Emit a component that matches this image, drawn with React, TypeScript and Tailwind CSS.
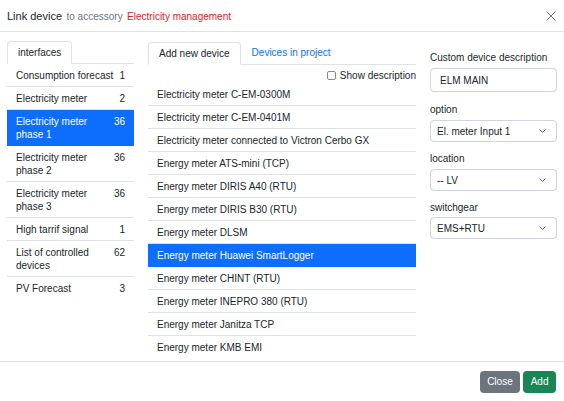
import React from "react";

const interfaces: { name: string; count: number; active?: boolean }[] = [
  { name: "Consumption forecast", count: 1 },
  { name: "Electricity meter", count: 2 },
  { name: "Electricity meter phase 1", count: 36, active: true },
  { name: "Electricity meter phase 2", count: 36 },
  { name: "Electricity meter phase 3", count: 36 },
  { name: "High tarrif signal", count: 1 },
  { name: "List of controlled devices", count: 62 },
  { name: "PV Forecast", count: 3 },
];

const devices: { name: string; active?: boolean }[] = [
  { name: "Electricity meter C-EM-0300M" },
  { name: "Electricity meter C-EM-0401M" },
  { name: "Electricity meter connected to Victron Cerbo GX" },
  { name: "Energy meter ATS-mini (TCP)" },
  { name: "Energy meter DIRIS A40 (RTU)" },
  { name: "Energy meter DIRIS B30 (RTU)" },
  { name: "Energy meter DLSM" },
  { name: "Energy meter Huawei SmartLogger", active: true },
  { name: "Energy meter CHINT (RTU)" },
  { name: "Energy meter INEPRO 380 (RTU)" },
  { name: "Energy meter Janitza TCP" },
  { name: "Energy meter KMB EMI" },
];

function Chevron() {
  return (
    <svg width="7" height="4" viewBox="0 0 7 4" className="shrink-0">
      <polyline points="0.5,0.5 3.5,3.3 6.5,0.5" fill="none" stroke="#495057" strokeWidth="0.9" />
    </svg>
  );
}

function SelectBox({ value }: { value: string }) {
  return (
    <div className="h-[22px] border border-[#ced4da] rounded-[4px] flex items-center justify-between pl-[6px] pr-[10px] text-[10px] leading-[13px]">
      <span>{value}</span>
      <Chevron />
    </div>
  );
}

export default function App() {
  return (
    <div className="w-[564px] h-[401px] bg-white flex flex-col text-[#212529] font-['Liberation_Sans',Arial,sans-serif] overflow-hidden">
      {/* header */}
      <div className="h-[32px] shrink-0 border-b border-[#dee2e6] flex items-center justify-between pl-[7px] pr-[8px]">
        <div className="leading-[13px]">
          <span className="text-[11px]">Link device</span>{" "}
          <span className="text-[10px] text-[#6c757d]">to accessory</span>{" "}
          <span className="text-[10px] text-[#e4172d]">Electricity management</span>
        </div>
        <svg width="10" height="10" viewBox="0 0 10 10">
          <line x1="0.5" y1="0.5" x2="9.5" y2="9.5" stroke="#777" strokeWidth="1" />
          <line x1="9.5" y1="0.5" x2="0.5" y2="9.5" stroke="#777" strokeWidth="1" />
        </svg>
      </div>

      {/* body */}
      <div className="flex-1 grid grid-cols-[127px_268px_127px] gap-x-[14px] px-[7px] pt-[9px] overflow-hidden items-start text-[10px] leading-[13px]">
        {/* left */}
        <div className="flex flex-col">
          <div className="flex border-b border-[#dee2e6]">
            <div className="-mb-px border border-[#dee2e6] border-b-white rounded-t-[4px] bg-white px-[10px] py-[4px]">
              interfaces
            </div>
          </div>
          <div className="flex flex-col">
            {interfaces.map((it, i) => (
              <div
                key={it.name}
                className={
                  "flex justify-between gap-[4px] px-[9px] pt-[5px] pb-[4px] border-b " +
                  (it.active
                    ? "bg-[#0d6efd] text-white border-[#0d6efd]"
                    : i === interfaces.length - 1
                    ? "border-transparent"
                    : "border-[#dee2e6]")
                }
              >
                <span className="flex-1">{it.name}</span>
                <span className="shrink-0">{it.count}</span>
              </div>
            ))}
          </div>
        </div>

        {/* middle */}
        <div className="flex flex-col">
          <div className="flex items-end border-b border-[#dee2e6]">
            <div className="-mb-px border border-[#dee2e6] border-b-white rounded-t-[4px] bg-white px-[10px] py-[4px]">
              Add new device
            </div>
            <div className="px-[10px] py-[4px] text-[#0d6efd] border border-transparent">Devices in project</div>
          </div>
          <div className="flex justify-end items-center gap-[4px] mt-[4px] mb-[1px] h-[13px]">
            <span className="w-[9px] h-[9px] border border-[#8a8a8a] rounded-[2px] bg-white" />
            <span>Show description</span>
          </div>
          <div className="flex flex-col">
            {devices.map((d, i) => (
              <div
                key={d.name}
                className={
                  "px-[9px] pt-[5px] pb-[4px] border-b " +
                  (d.active
                    ? "bg-[#0d6efd] text-white border-[#0d6efd]"
                    : i === devices.length - 1
                    ? "border-transparent"
                    : "border-[#dee2e6]")
                }
              >
                {d.name}
              </div>
            ))}
          </div>
        </div>

        {/* right */}
        <div className="flex flex-col pt-[10px]">
          <div className="mb-[4px]">Custom device description</div>
          <div className="h-[24px] border border-[#ced4da] rounded-[4px] flex items-center pl-[9px] mb-[11px]">
            ELM MAIN
          </div>
          <div className="mb-[4px]">option</div>
          <div className="mb-[10px]">
            <SelectBox value="El. meter Input 1" />
          </div>
          <div className="mb-[4px]">location</div>
          <div className="mb-[10px]">
            <SelectBox value="-- LV" />
          </div>
          <div className="mb-[3px]">switchgear</div>
          <SelectBox value="EMS+RTU" />
        </div>
      </div>

      {/* footer */}
      <div className="h-[40px] shrink-0 border-t border-[#dee2e6] flex items-center justify-end gap-[3px] pr-[8px] text-[10px] leading-[13px]">
        <button className="h-[22px] px-[7.5px] rounded-[4px] bg-[#6c757d] text-white">Close</button>
        <button className="h-[22px] px-[7.5px] rounded-[4px] bg-[#198754] text-white">Add</button>
      </div>
    </div>
  );
}
